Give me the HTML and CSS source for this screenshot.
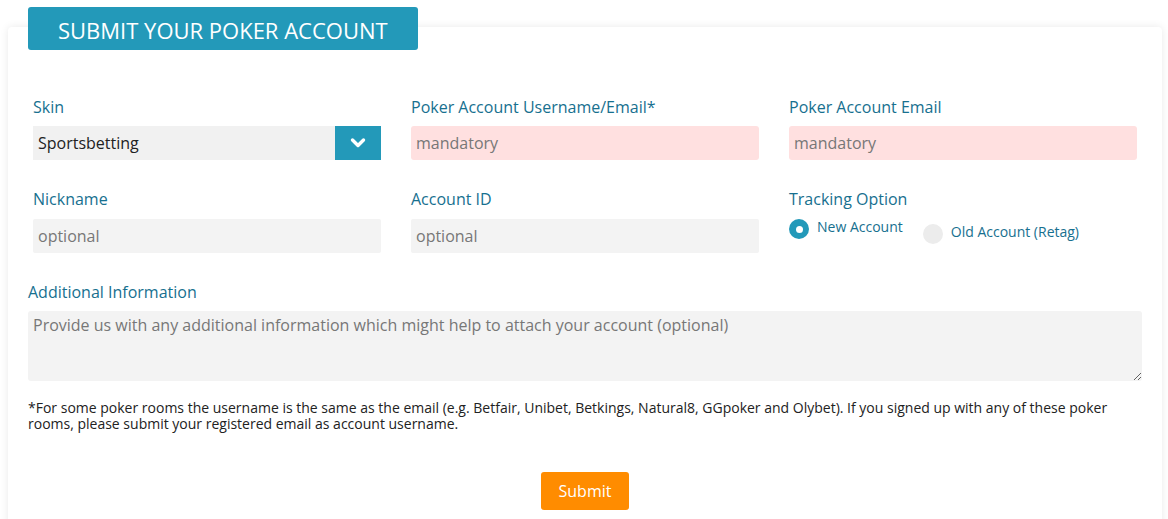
FILE: index.html
```html
<!DOCTYPE html>
<html lang="en">
<head>
<meta charset="utf-8">
<title>Submit your poker account</title>
<link rel="stylesheet" href="styles.css">
</head>
<body>
<div class="page">
  <div class="card">
    <div class="tab">SUBMIT YOUR POKER ACCOUNT</div>
    <div class="grid">
      <div class="field">
        <label class="label">Skin</label>
        <div class="select">
          <span class="select-value">Sportsbetting</span>
          <span class="select-btn">
            <svg width="16" height="12" viewBox="0 0 16 12"><polyline points="2.5,3 8,8.5 13.5,3" fill="none" stroke="#fff" stroke-width="3.4" stroke-linecap="round" stroke-linejoin="round"/></svg>
          </span>
        </div>
      </div>
      <div class="field">
        <label class="label">Poker Account Username/Email*</label>
        <input class="input input-required" type="text" placeholder="mandatory">
      </div>
      <div class="field">
        <label class="label">Poker Account Email</label>
        <input class="input input-required" type="text" placeholder="mandatory">
      </div>
      <div class="field">
        <label class="label">Nickname</label>
        <input class="input" type="text" placeholder="optional">
      </div>
      <div class="field">
        <label class="label">Account ID</label>
        <input class="input" type="text" placeholder="optional">
      </div>
      <div class="field">
        <label class="label">Tracking Option</label>
        <div class="radios">
          <div class="radio">
            <span class="radio-dot radio-dot-on"></span>
            <span class="radio-text">New Account</span>
          </div>
          <div class="radio radio-low">
            <span class="radio-dot"></span>
            <span class="radio-text">Old Account (Retag)</span>
          </div>
        </div>
      </div>
    </div>
    <div class="wide">
      <label class="label">Additional Information</label>
      <textarea class="textarea" placeholder="Provide us with any additional information which might help to attach your account (optional)"></textarea>
      <p class="note">*For some poker rooms the username is the same as the email (e.g. Betfair, Unibet, Betkings, Natural8, GGpoker and Olybet). If you signed up with any of these poker rooms, please submit your registered email as account username.</p>
      <div class="actions">
        <button class="submit" type="button">Submit</button>
      </div>
    </div>
  </div>
</div>
</body>
</html>
```
FILE: styles.css
```css
* { box-sizing: border-box; }
html, body { margin: 0; padding: 0; background: #fff; }
body {
  font-family: "Open Sans", "Noto Sans", sans-serif;
  color: #222;
  overflow: hidden;
}
.page {
  padding: 27px 6px 20px 8px;
  background: #fff;
}
.card {
  position: relative;
  background: #fff;
  border-radius: 4px;
  box-shadow: 0 0 9px rgba(0,0,0,0.09);
  padding: 69px 25px 20px;
}
.tab {
  position: absolute;
  left: 20px;
  top: -20px;
  width: 390px;
  height: 43px;
  background: #2399b9;
  color: #fff;
  border-radius: 3px;
  font-size: 22px;
  line-height: 43px;
  padding-top: 2px;
  padding-left: 30px;
  white-space: nowrap;
}
.grid {
  display: grid;
  grid-template-columns: repeat(3, 1fr);
  column-gap: 30px;
  row-gap: 28px;
}
.label {
  display: block;
  font-size: 16px;
  line-height: 22px;
  color: #17708f;
  margin-bottom: 8px;
}
.field:nth-child(n+4) .label { margin-bottom: 9px; }
.select {
  display: flex;
  height: 34px;
  background: #f1f1f1;
}
.select-value {
  flex: 1;
  font-size: 16px;
  line-height: 34px;
  padding-left: 5px;
  color: #222;
}
.select-btn {
  width: 46px;
  background: #2399b9;
  display: flex;
  align-items: center;
  justify-content: center;
}
.input {
  display: block;
  width: 100%;
  height: 34px;
  border: 0;
  outline: 0;
  border-radius: 2px;
  background: #f3f3f3;
  font-family: inherit;
  font-size: 16px;
  padding: 0 5px;
  color: #222;
}
.input::placeholder, .textarea::placeholder { color: #777; opacity: 1; }
.input-required { background: #ffe0e0; border-radius: 3px; }
.radios {
  display: flex;
  align-items: flex-start;
  gap: 20px;
}
.radio {
  display: flex;
  align-items: flex-start;
  gap: 8px;
}
.radio-low { margin-top: 5px; }
.radio-dot {
  width: 20px;
  height: 20px;
  border-radius: 50%;
  background: #ececec;
  flex: none;
}
.radio-dot-on {
  background: #2399b9;
  display: flex;
  align-items: center;
  justify-content: center;
}
.radio-dot-on::after {
  content: "";
  width: 7px;
  height: 7px;
  border-radius: 50%;
  background: #fff;
}
.radio-text {
  font-size: 14px;
  line-height: 16px;
  color: #17708f;
}
.wide {
  margin: 28px -5px 0;
}
.textarea {
  display: block;
  width: 100%;
  height: 70px;
  border: 0;
  outline: 0;
  border-radius: 3px;
  background: #f3f3f3;
  font-family: inherit;
  font-size: 16px;
  line-height: 22px;
  padding: 3px 5px;
  color: #222;
  resize: vertical;
}
.note {
  margin: 19px 0 0;
  font-size: 14px;
  line-height: 16px;
  color: #222;
}
.actions {
  display: flex;
  justify-content: center;
  margin-top: 40px;
}
.submit {
  width: 88px;
  height: 38px;
  border: 0;
  border-radius: 3px;
  background: #ff8c00;
  color: #fff;
  font-family: inherit;
  font-size: 16px;
  padding: 0;
}
```
